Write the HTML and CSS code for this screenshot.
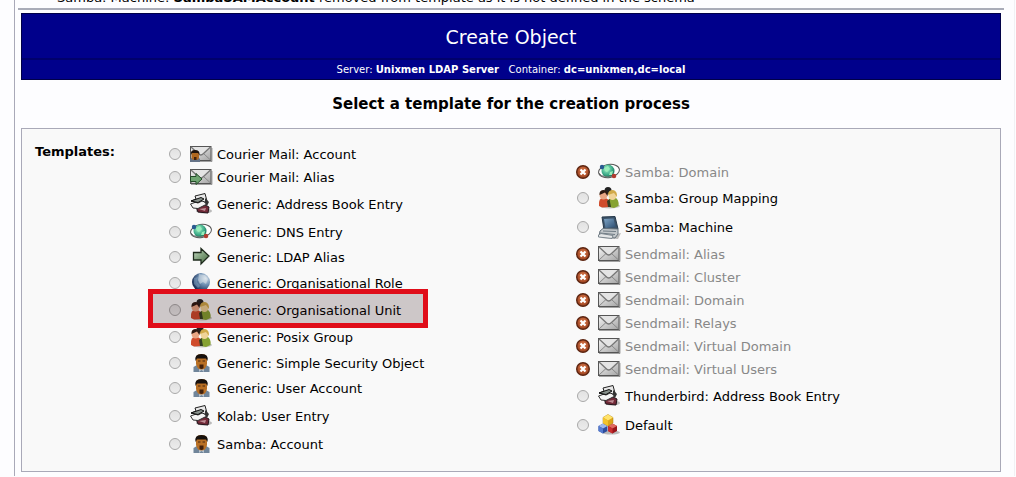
FILE: index.html
```
<!DOCTYPE html>
<html lang="en">
  <head>
    <meta charset="UTF-8" />
    <meta name="viewport" content="width=device-width, initial-scale=1.0" />
    <title>Create Object</title>
    <link rel="stylesheet" href="styles.css">
  </head>
  <body>
    <svg class="sprite" aria-hidden="true">
      <defs>
        <linearGradient id="paper" x1="0" y1="0" x2="1" y2="1">
          <stop offset="0" stop-color="#f6f6f6" />
          <stop offset="1" stop-color="#a4a4a4" />
        </linearGradient>
        <linearGradient id="green" x1="0" y1="0" x2="1" y2="1">
          <stop offset="0" stop-color="#c9dcc6" />
          <stop offset="0.5" stop-color="#7fa07c" />
          <stop offset="1" stop-color="#47693f" />
        </linearGradient>
        <radialGradient id="earth" cx="0.75" cy="0.3" r="0.8">
          <stop offset="0" stop-color="#d5e0ea" />
          <stop offset="0.45" stop-color="#6f90b3" />
          <stop offset="1" stop-color="#142850" />
        </radialGradient>
        <radialGradient id="teal" cx="0.4" cy="0.35" r="0.7">
          <stop offset="0" stop-color="#a6f0c8" />
          <stop offset="0.6" stop-color="#3fae8a" />
          <stop offset="1" stop-color="#13664f" />
        </radialGradient>
        <radialGradient id="rust" cx="0.5" cy="0.4" r="0.6">
          <stop offset="0" stop-color="#d9784a" />
          <stop offset="1" stop-color="#9a3f1c" />
        </radialGradient>
        <linearGradient id="screen" x1="0" y1="0" x2="1" y2="1">
          <stop offset="0" stop-color="#7fa5c6" />
          <stop offset="1" stop-color="#2c4d70" />
        </linearGradient>
      </defs>
      <symbol id="mail" viewBox="0 0 24 24">
        <path d="M1 18.500H22V5" fill="none" stroke="#000" stroke-opacity="0.35" />
        <rect x="0.500" y="3.500" width="20.500" height="14" fill="url(#paper)" stroke="#555" />
        <path d="M1 17L8 10.500M20.500 17L13.500 10.500" stroke="#888" />
        <path d="M1 4L8 10.500Q10.700 13.500 13.500 10.500L20.500 4" fill="#e4e4e4" stroke="#777" stroke-width="1.300" />
      </symbol>
      <symbol id="mail-user" viewBox="0 0 24 24">
        <use href="#mail" width="24" height="24" />
        <path d="M0 19V16L3 14H8L10 16V19Z" fill="#667488" />
        <rect x="1.500" y="8" width="7.500" height="9" rx="3" fill="#b0681f" />
        <path d="M1 12Q0 7 5 7Q10 7 9.500 12L8 10H2Z" fill="#20140d" />
        <path d="M4 14H6.500V17H4Z" fill="#422009" />
      </symbol>
      <symbol id="mail-arrow" viewBox="0 0 24 24">
        <use href="#mail" width="24" height="24" />
        <path d="M0.500 10.500H6V7.500L12 13L6 18.500V15.500H0.500Z" fill="#6fa572" stroke="#234b28" />
      </symbol>
      <symbol id="book" viewBox="0 0 24 24">
        <ellipse cx="14" cy="18" rx="8" ry="2.500" fill="#000" opacity="0.25" />
        <path d="M6 14L8 19L18 20L19 14L15 12Z" fill="#722a38" stroke="#22131a" />
        <path d="M9 16L16 15L15 18Z" fill="#bf8e96" />
        <path d="M0.500 11L12 7L17 11L8 15.500L3 15Z" fill="#f5f5f5" stroke="#333" />
        <path d="M5 3L15 0.500L17.500 10L12 8L8 10L1 8L6 6Z" fill="#e8e8e8" stroke="#222" />
        <path d="M1 8L11 4.500L14 6L8 9.500Z" fill="#88918c" stroke="#111" />
        <path d="M15 5L19 9L17 13L15 10Z" fill="#333" />
      </symbol>
      <symbol id="dns" viewBox="0 0 24 24">
        <ellipse cx="11" cy="10" rx="10.500" ry="6.500" transform="rotate(-10 11 10)" fill="#fff" stroke="#555" />
        <circle cx="10" cy="10" r="6.500" fill="url(#teal)" />
        <path d="M6 7L10 5L12 8L9 11L7 10ZM12 11L15 10L14 14L11 14Z" fill="#98edba" />
        <path d="M1 12Q5 18 15 15" fill="none" stroke="#777" />
        <circle cx="4" cy="6" r="2.200" fill="#285a91" />
        <circle cx="16" cy="15" r="2.300" fill="#b13c30" />
      </symbol>
      <symbol id="arrow" viewBox="0 0 24 24">
        <path d="M3.500 6.500H11V2.500L19 10L11 18V14H3.500Z" fill="url(#green)" stroke="#1e2b1d" stroke-width="1.300" />
      </symbol>
      <symbol id="globe" viewBox="0 0 24 24">
        <circle cx="11" cy="10" r="9" fill="url(#earth)" />
        <path d="M9 2L15 3L18 7L16 12L13 10L10 12L8 8Z" fill="#e4e9ee" opacity="0.5" />
        <path d="M4 6L8 5L7 10L10 14L8 16L4 12Z" fill="#93b6d2" opacity="0.4" />
      </symbol>
      <symbol id="people" viewBox="0 0 24 24">
        <ellipse cx="12" cy="19" rx="10" ry="2.500" fill="#000" opacity="0.2" />
        <circle cx="10" cy="3.500" r="3.500" fill="#222" />
        <path d="M1 19Q0 11 6 10L11 13V20L4 20.500Z" fill="#d04c2c" />
        <path d="M11 20V12L16 10Q21.500 12 20.500 19L16 21Z" fill="#86a232" />
        <ellipse cx="5.500" cy="8" rx="4" ry="4.500" fill="#e9a684" />
        <path d="M1.500 8Q1 3 6 3Q11 4 9.500 9L7 5.500Z" fill="#2c1912" />
        <ellipse cx="14.500" cy="8.500" rx="4" ry="4.500" fill="#f0d498" />
        <path d="M10 8Q10 3 15 3Q19.500 4 19 10L16 6Z" fill="#d1aa4a" />
        <path d="M9 14L11.500 12L13 20H10Z" fill="#343e23" />
      </symbol>
      <symbol id="user" viewBox="0 0 24 24">
        <path d="M3.500 20V15L7 13H16L19.500 15V20Z" fill="#70859a" />
        <path d="M9 15H14V20L11.500 18L9 20Z" fill="#b9c4cf" />
        <path d="M6 6Q6 2 11.500 2Q17 2 17 6V12Q16 17.500 11.500 17.500Q7 17.500 6 12Z" fill="#b86f24" />
        <path d="M5.500 9Q4 2 11.500 2Q19 2 17.500 9L16 6.500H7Z" fill="#17110e" />
        <path d="M8 9H10.500M12.500 9H15" stroke="#4a2810" />
        <path d="M9.500 12.500H13.500V16Q11.500 18 9.500 16Z" fill="#42210c" />
      </symbol>
      <symbol id="computer" viewBox="0 0 24 24">
        <path d="M3 22L20 23L23 17Z" fill="#000" opacity="0.25" />
        <path d="M4 1L17 0.500L20 13L6 14Z" fill="#3c5369" stroke="#27394b" />
        <path d="M6 3L15.500 2.500L17.500 11L7.500 12Z" fill="url(#screen)" />
        <path d="M2 15L5 12.500L20 13L20 18L17 22L1 20Z" fill="#c4c9cc" stroke="#67737c" />
        <path d="M2 17L17 18.500M5 15L18 15.500" stroke="#6f7b84" />
        <path d="M0.500 19L3 17.500L15 19.500L14 22.500L0.500 21Z" fill="#e4e6e7" stroke="#7a858d" />
      </symbol>
      <symbol id="blocks" viewBox="0 0 24 24">
        <ellipse cx="13" cy="18.500" rx="9" ry="2" fill="#000" opacity="0.25" />
        <path d="M0.500 12L5 9.500L9.500 12V17L5 19.500L0.500 17Z" fill="#2d4c9c" />
        <path d="M0.500 12L5 9.500L9.500 12L5 14.500Z" fill="#9db7ec" />
        <path d="M0.500 12L5 14.500V19.500L0.500 17Z" fill="#557bd0" />
        <path d="M10 12L14.500 9.500L19 12V17L14.500 19.500L10 17Z" fill="#98141a" />
        <path d="M10 12L14.500 9.500L19 12L14.500 14.500Z" fill="#e06a60" />
        <path d="M10 12L14.500 14.500V19.500L10 17Z" fill="#cb2e2e" />
        <path d="M5 3.500L10 0.500L15 3.500V9L10 12L5 9Z" fill="#dba51a" stroke="#a97c10" stroke-width="0.500" />
        <path d="M5 3.500L10 0.500L15 3.500L10 6.500Z" fill="#ffe36b" />
        <path d="M5 3.500L10 6.500V12L5 9Z" fill="#f2c32c" />
      </symbol>
      <symbol id="error" viewBox="0 0 14 14">
        <circle cx="7" cy="7" r="6.300" fill="url(#rust)" stroke="#5c2511" stroke-width="1.400" />
        <path d="M4.500 4.500L9.500 9.500M9.500 4.500L4.500 9.500" stroke="#fff" stroke-width="2.200" />
      </symbol>
    </svg>

    <main class="page">
      <div class="sysmsg">
        <p>Samba: Machine: <b>SambaSAMAccount</b> removed from template as it is not defined in the schema</p>
      </div>
      <div class="content">
        <header class="banner">
          <h1>Create Object</h1>
          <p>Server: <b>Unixmen LDAP Server</b> &nbsp; Container: <b>dc=unixmen,dc=local</b></p>
        </header>
        <h2>Select a template for the creation process</h2>
        <form class="templates">
          <h3>Templates:</h3>
          <div class="column">
            <label class="row mail"><input type="radio" name="template" /><svg class="icon"><use href="#mail-user" /></svg>Courier Mail: Account</label>
            <label class="row mail"><input type="radio" name="template" /><svg class="icon"><use href="#mail-arrow" /></svg>Courier Mail: Alias</label>
            <label class="row tall"><input type="radio" name="template" /><svg class="icon"><use href="#book" /></svg>Generic: Address Book Entry</label>
            <label class="row"><input type="radio" name="template" /><svg class="icon"><use href="#dns" /></svg>Generic: DNS Entry</label>
            <label class="row"><input type="radio" name="template" /><svg class="icon"><use href="#arrow" /></svg>Generic: LDAP Alias</label>
            <label class="row group"><input type="radio" name="template" /><svg class="icon"><use href="#globe" /></svg>Generic: Organisational Role</label>
            <label class="row group marked"><input type="radio" name="template" /><svg class="icon"><use href="#people" /></svg>Generic: Organisational Unit</label>
            <label class="row group"><input type="radio" name="template" /><svg class="icon"><use href="#people" /></svg>Generic: Posix Group</label>
            <label class="row"><input type="radio" name="template" /><svg class="icon"><use href="#user" /></svg>Generic: Simple Security Object</label>
            <label class="row"><input type="radio" name="template" /><svg class="icon"><use href="#user" /></svg>Generic: User Account</label>
            <label class="row tall"><input type="radio" name="template" /><svg class="icon"><use href="#book" /></svg>Kolab: User Entry</label>
            <label class="row"><input type="radio" name="template" /><svg class="icon"><use href="#user" /></svg>Samba: Account</label>
          </div>
          <div class="column">
            <div class="row disabled"><svg class="error"><use href="#error" /></svg><svg class="icon"><use href="#dns" /></svg>Samba: Domain</div>
            <label class="row group"><input type="radio" name="template" /><svg class="icon"><use href="#people" /></svg>Samba: Group Mapping</label>
            <label class="row tall"><input type="radio" name="template" /><svg class="icon"><use href="#computer" /></svg>Samba: Machine</label>
            <div class="row mail disabled"><svg class="error"><use href="#error" /></svg><svg class="icon"><use href="#mail" /></svg>Sendmail: Alias</div>
            <div class="row mail disabled"><svg class="error"><use href="#error" /></svg><svg class="icon"><use href="#mail" /></svg>Sendmail: Cluster</div>
            <div class="row mail disabled"><svg class="error"><use href="#error" /></svg><svg class="icon"><use href="#mail" /></svg>Sendmail: Domain</div>
            <div class="row mail disabled"><svg class="error"><use href="#error" /></svg><svg class="icon"><use href="#mail" /></svg>Sendmail: Relays</div>
            <div class="row mail disabled"><svg class="error"><use href="#error" /></svg><svg class="icon"><use href="#mail" /></svg>Sendmail: Virtual Domain</div>
            <div class="row mail disabled"><svg class="error"><use href="#error" /></svg><svg class="icon"><use href="#mail" /></svg>Sendmail: Virtual Users</div>
            <label class="row tall"><input type="radio" name="template" /><svg class="icon"><use href="#book" /></svg>Thunderbird: Address Book Entry</label>
            <label class="row group"><input type="radio" name="template" /><svg class="icon"><use href="#blocks" /></svg>Default</label>
          </div>
        </form>
      </div>
    </main>
  </body>
</html>
```
FILE: styles.css
```
body {
  margin: 0;
  background: #fdfdff;
  color: #000;
  font: 13px/18px "DejaVu Sans", Verdana, sans-serif;
}
h1,
h2,
h3,
p {
  margin: 0;
}
.sprite {
  position: absolute;
  width: 0;
  height: 0;
}
.page {
  margin: 0 1px 0 14px;
  padding-bottom: 4px;
  border-left: 1px solid #a9a9b8;
  border-right: 1px solid #f1f1f4;
}
/* tail of the message list that has scrolled off the top */
.sysmsg {
  display: flex;
  align-items: flex-end;
  height: 8px;
  margin: 0 10px 3px 3px;
  padding-left: 39px;
  border-bottom: 2px solid #a9acb8;
  line-height: 20px;
  overflow: hidden;
  white-space: nowrap;
}
.content {
  margin: 0 13px 0 6px;
}
.banner {
  background: #00008b;
  border: 1px solid #000048;
  color: #fff;
  text-align: center;
}
.banner h1 {
  padding-top: 2px;
  border-bottom: 2px solid #00006c;
  font-size: 19px;
  font-weight: normal;
  line-height: 42px;
}
.banner p {
  font-size: 10px;
  line-height: 19px;
}
h2 {
  font-size: 15px;
  line-height: 48px;
  text-align: center;
}
.templates {
  display: grid;
  grid-template-columns: 133px 1fr 1fr;
  align-items: center;
  padding: 14px 16px 14px 13px;
  background: #f9f9f9;
  border: 1px solid #a9a9b8;
}
.templates h3 {
  align-self: start;
  font-size: 13px;
}
.row {
  position: relative;
  display: flex;
  align-items: center;
  height: 25px;
}
.mail {
  height: 23px;
}
.group {
  height: 27px;
}
.tall {
  height: 31px;
}
.disabled {
  color: #888;
}
input {
  appearance: none;
  width: 12px;
  height: 12px;
  margin: 0 9px 2px 1px;
  border: 1px solid #a8a8a8;
  border-radius: 50%;
  background: linear-gradient(#e2e2e2, #ececec);
}
.error {
  width: 14px;
  height: 14px;
  margin: 0 8px 2px 0;
}
.icon {
  width: 24px;
  height: 24px;
  margin-right: 3px;
}
.marked::after {
  content: "";
  position: absolute;
  z-index: 1;
  inset: -8px auto -4px -20px;
  width: 270px;
  border: 5px solid #e00d19;
  background: rgba(30, 0, 5, 0.2);
}
```
